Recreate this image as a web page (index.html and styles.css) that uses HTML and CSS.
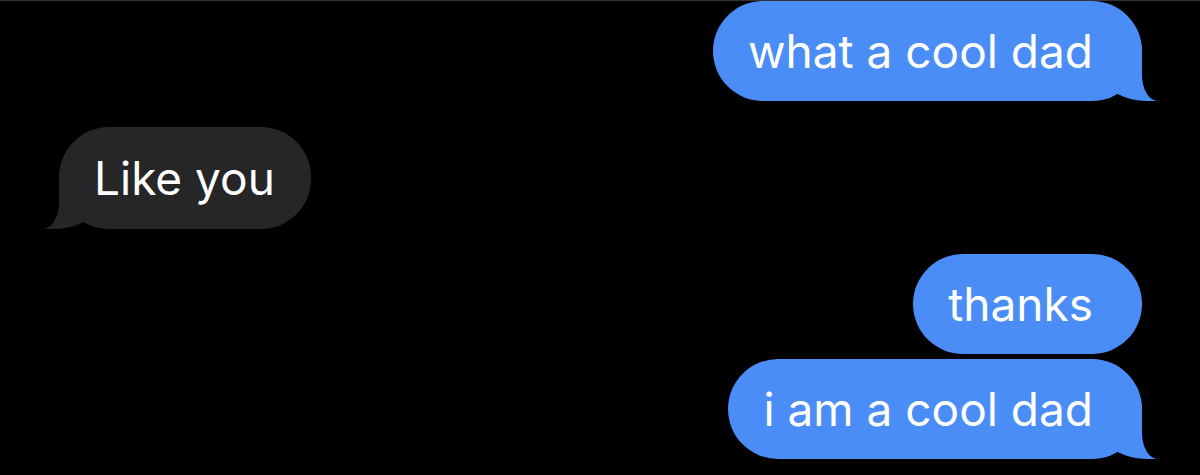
FILE: index.html
```html
<!DOCTYPE html>
<html lang="en">
<head>
    <meta charset="UTF-8">
    <meta name="viewport" content="width=device-width, initial-scale=1.0">
    <title>Messages</title>
    <link rel="stylesheet" href="styles.css">
</head>
<body>
    <div class="chat">
        <div class="row sent-row">
            <div class="bubble sent">what a cool dad</div>
        </div>
        <div class="row received-row">
            <div class="bubble received">Like you</div>
        </div>
        <div class="row sent-row group-start">
            <div class="bubble sent no-tail">thanks</div>
        </div>
        <div class="row sent-row group-next">
            <div class="bubble sent">i am a cool dad</div>
        </div>
    </div>
</body>
</html>
```

FILE: styles.css
```css
html, body { margin: 0; padding: 0; background: #000; }
body { font-family: Inter, "Noto Sans", sans-serif; overflow: hidden; }
.chat { display: flex; flex-direction: column; padding: 0 58px 0 59px; border-top: 1px solid #333; height: 474px; }
.row { display: flex; }
.sent-row { justify-content: flex-end; }
.received-row { justify-content: flex-start; margin-top: 26px; }
.group-start { margin-top: 25px; }
.group-next { margin-top: 5px; }

.bubble { position: relative; height: 100px; line-height: 100px; font-size: 46px; color: #fff; border-radius: 50px; white-space: nowrap; }
.sent { background: #4a8df7; padding: 0 49px 0 35px; }
.received { background: #262628; padding: 0 36px 0 35px; height: 102px; line-height: 102px; }

/* tails: coloured blob, then a black blob that carves the curve */
.sent::before { content: ""; position: absolute; bottom: 0; right: -15px; width: 50px; height: 55px; background: #4a8df7; border-bottom-left-radius: 40px 22px; }
.sent::after { content: ""; position: absolute; bottom: 0; right: -40px; width: 40px; height: 55px; background: #000; border-bottom-left-radius: 16px 26px; }
.received::before { content: ""; position: absolute; bottom: 0; left: -16px; width: 51px; height: 55px; background: #262628; border-bottom-right-radius: 40px 22px; }
.received::after { content: ""; position: absolute; bottom: 0; left: -40px; width: 40px; height: 55px; background: #000; border-bottom-right-radius: 17px 26px; }
.no-tail::before, .no-tail::after { display: none; }
```
